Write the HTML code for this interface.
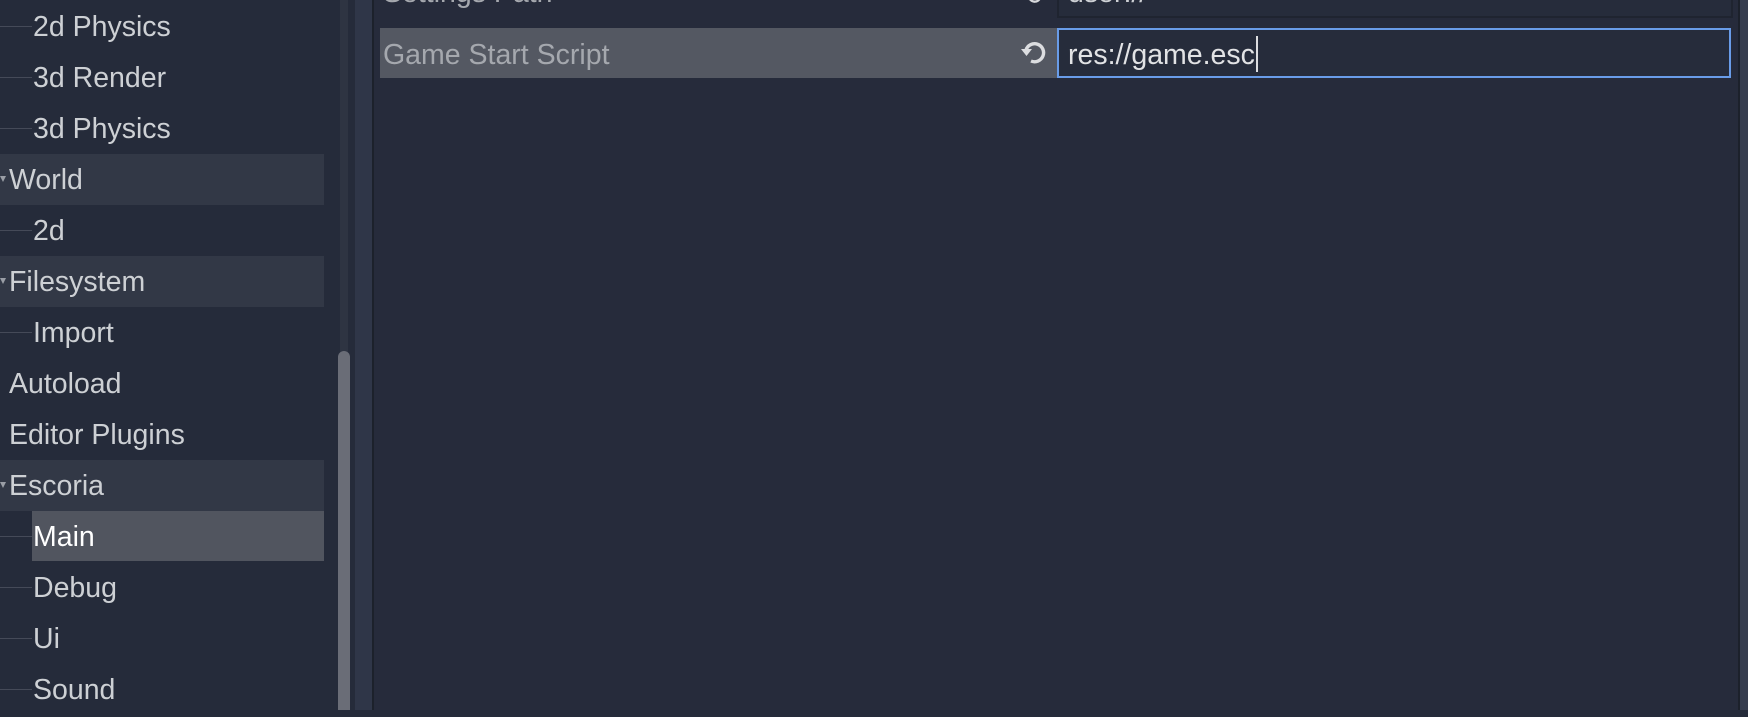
<!DOCTYPE html>
<html><head><style>
body{margin:0;width:1748px;height:710px;background:#252b3a;overflow:hidden;position:relative;font-family:"Liberation Sans",sans-serif;font-size:28.5px;color:#cdd0d4}
div{position:absolute}
.r{left:0;width:324px;height:51px;line-height:53px}
.hl{background:#323846}
.t{left:9px}
.c{left:33px}
.ln{left:0;width:32px;height:1px;background:#454a58;top:25px}
.ar{left:0;top:22px;width:0;height:0;border-left:3px solid transparent;border-right:3px solid transparent;border-top:6px solid #9a9ea6}
</style></head><body>
<div class="r" style="top:1px"><div class="ln"></div><span class="c" style="position:absolute">2d Physics</span></div>
<div class="r" style="top:52px"><div class="ln"></div><span class="c" style="position:absolute">3d Render</span></div>
<div class="r" style="top:103px"><div class="ln"></div><span class="c" style="position:absolute">3d Physics</span></div>
<div class="r hl" style="top:154px"><div class="ar"></div><span class="t" style="position:absolute">World</span></div>
<div class="r" style="top:205px"><div class="ln"></div><span class="c" style="position:absolute">2d</span></div>
<div class="r hl" style="top:256px"><div class="ar"></div><span class="t" style="position:absolute">Filesystem</span></div>
<div class="r" style="top:307px"><div class="ln"></div><span class="c" style="position:absolute">Import</span></div>
<div class="r" style="top:358px"><span class="t" style="position:absolute">Autoload</span></div>
<div class="r" style="top:409px"><span class="t" style="position:absolute">Editor Plugins</span></div>
<div class="r hl" style="top:460px"><div class="ar"></div><span class="t" style="position:absolute">Escoria</span></div>
<div class="r" style="top:511px"><div class="ln"></div><div style="left:32px;top:0;width:292px;height:50px;background:#51555f"></div><span class="c" style="position:absolute;color:#fff">Main</span></div>
<div class="r" style="top:562px"><div class="ln"></div><span class="c" style="position:absolute">Debug</span></div>
<div class="r" style="top:613px"><div class="ln"></div><span class="c" style="position:absolute">Ui</span></div>
<div class="r" style="top:664px"><div class="ln"></div><span class="c" style="position:absolute">Sound</span></div>

<div style="left:340px;top:0;width:8px;height:710px;background:#2e3442"></div>
<div style="left:338px;top:351px;width:12px;height:359px;background:#6a6d77;border-radius:6px 6px 0 0"></div>
<div style="left:355px;top:0;width:17px;height:710px;background:#2f3648"></div>
<div style="left:372px;top:0;width:2px;height:710px;background:#1c212b"></div>
<div style="left:374px;top:0;width:1364px;height:710px;background:#262b3b"></div>
<div style="left:1738px;top:0;width:2px;height:710px;background:#1c212b"></div>
<div style="left:1740px;top:0;width:8px;height:710px;background:#363d4e"></div>

<div style="left:383px;top:-27px;line-height:40px;color:#a5a8ae">Settings Path</div>
<div style="left:1057px;top:-2px;width:672px;height:18px;border:2px solid #1f2430;border-top:none;background:#262c3b"></div>
<div style="left:1068px;top:-27px;line-height:40px;color:#cdd0d4">user://</div>
<svg style="position:absolute;left:1020px;top:-14px" width="28" height="20" viewBox="0 0 28 28"><path d="M7 14 A8 8 0 1 0 14 6 L11 6" fill="none" stroke="#d8d9dc" stroke-width="3.2"/><path d="M2 13 L12 13 L7 20 Z" fill="#d8d9dc"/></svg>

<div style="left:380px;top:28px;width:677px;height:50px;background:#545862"></div>
<div style="left:383px;top:29px;line-height:52px;color:#a5a8ae">Game Start Script</div>
<svg style="position:absolute;left:1020px;top:39px" width="28" height="28" viewBox="0 0 28 28"><path d="M6 11 A9 9 0 1 1 11 22" fill="none" stroke="#dcdde0" stroke-width="3.4"/><path d="M1 10 L12 10 L6.5 17 Z" fill="#dcdde0"/></svg>
<div style="left:1057px;top:28px;width:670px;height:46px;border:2px solid #699ce8;background:#262c3b"></div>
<div style="left:1068px;top:29px;line-height:52px;color:#e2e3e5">res://game.esc</div>
<div style="left:1256px;top:36px;width:2px;height:36px;background:#dcdde0"></div>
</body></html>
